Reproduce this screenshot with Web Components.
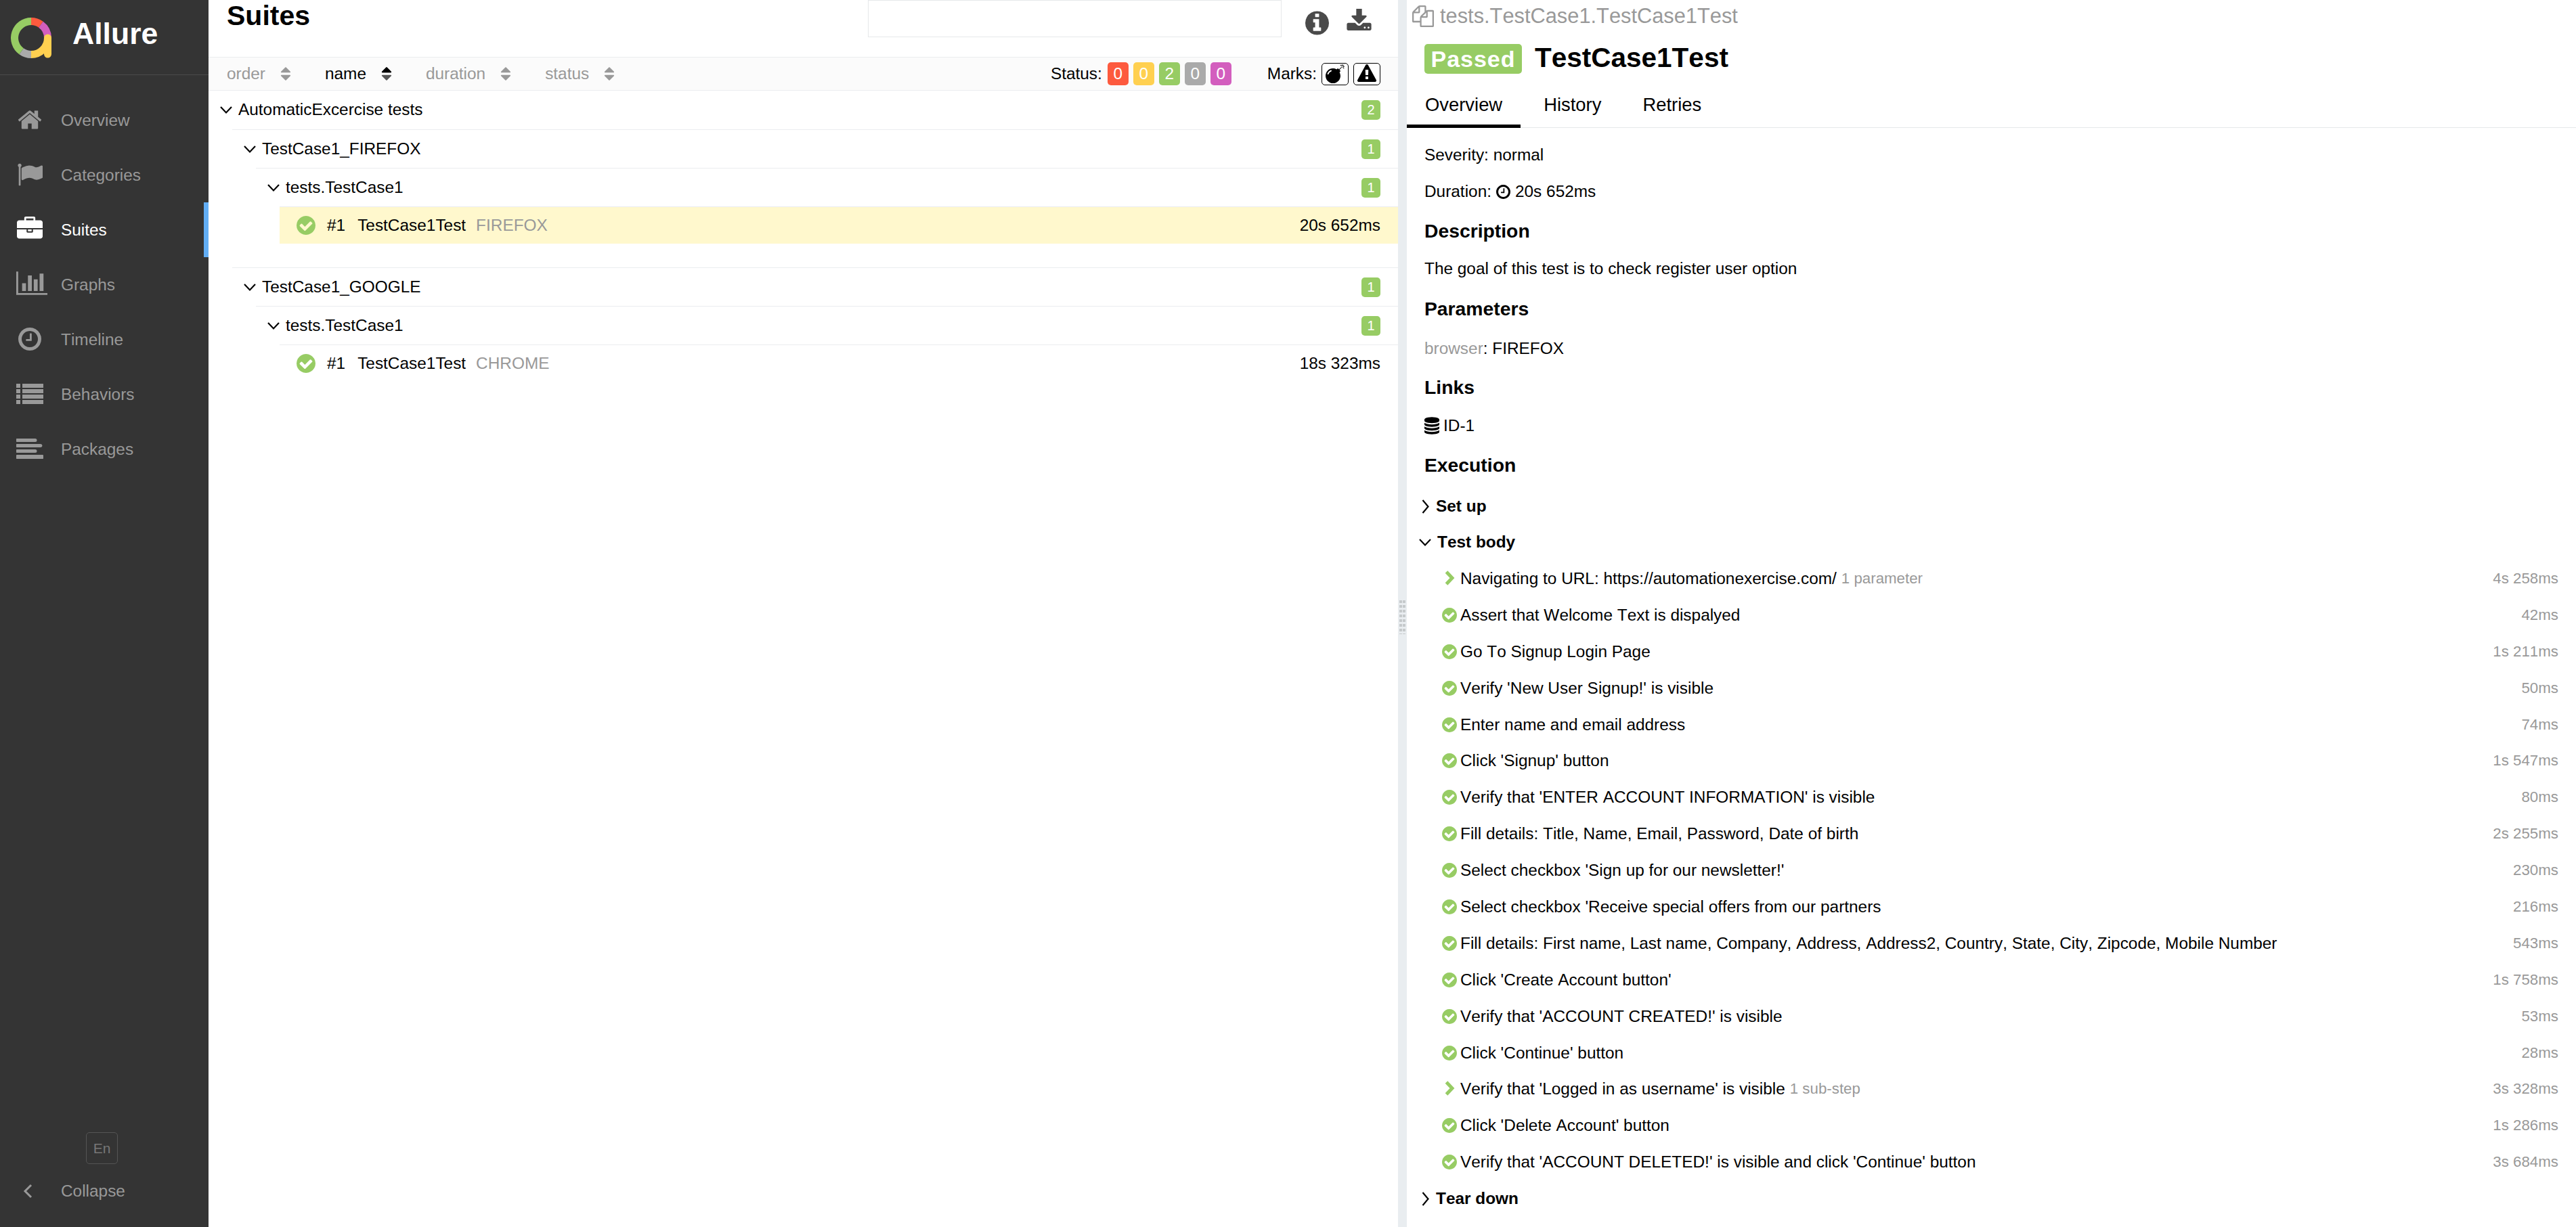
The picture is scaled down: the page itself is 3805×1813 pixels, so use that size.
<!DOCTYPE html>
<html>
<head>
<meta charset="utf-8">
<title>Allure</title>
<style>
  html, body { margin: 0; height: 100%; overflow: hidden; background: #fff; }
  body { font: 24.4px "Liberation Sans", Arial, sans-serif; font-kerning: none; color: #000; }
</style>
</head>
<body>
<al-app>
  <al-sidebar slot="side">
    <al-nav-item icon="home">Overview</al-nav-item>
    <al-nav-item icon="flag">Categories</al-nav-item>
    <al-nav-item icon="briefcase" active>Suites</al-nav-item>
    <al-nav-item icon="chart">Graphs</al-nav-item>
    <al-nav-item icon="clock">Timeline</al-nav-item>
    <al-nav-item icon="list">Behaviors</al-nav-item>
    <al-nav-item icon="align">Packages</al-nav-item>
  </al-sidebar>

  <al-suites slot="left">
    <al-tree-group name="AutomaticExcercise tests" count="2" first>
      <al-tree-group name="TestCase1_FIREFOX" count="1">
        <al-tree-group name="tests.TestCase1" count="1">
          <al-tree-leaf num="#1" name="TestCase1Test" param="FIREFOX" time="20s 652ms" selected></al-tree-leaf>
        </al-tree-group>
      </al-tree-group>
      <al-tree-group name="TestCase1_GOOGLE" count="1">
        <al-tree-group name="tests.TestCase1" count="1">
          <al-tree-leaf num="#1" name="TestCase1Test" param="CHROME" time="18s 323ms"></al-tree-leaf>
        </al-tree-group>
      </al-tree-group>
    </al-tree-group>
  </al-suites>

  <al-detail slot="right">
    <al-step name="Navigating to URL: https://automationexercise.com/" extra="1 parameter" time="4s 258ms" nested></al-step>
    <al-step name="Assert that Welcome Text is dispalyed" time="42ms"></al-step>
    <al-step name="Go To Signup Login Page" time="1s 211ms"></al-step>
    <al-step name="Verify 'New User Signup!' is visible" time="50ms"></al-step>
    <al-step name="Enter name and email address" time="74ms"></al-step>
    <al-step name="Click 'Signup' button" time="1s 547ms"></al-step>
    <al-step name="Verify that 'ENTER ACCOUNT INFORMATION' is visible" time="80ms"></al-step>
    <al-step name="Fill details: Title, Name, Email, Password, Date of birth" time="2s 255ms"></al-step>
    <al-step name="Select checkbox 'Sign up for our newsletter!'" time="230ms"></al-step>
    <al-step name="Select checkbox 'Receive special offers from our partners" time="216ms"></al-step>
    <al-step name="Fill details: First name, Last name, Company, Address, Address2, Country, State, City, Zipcode, Mobile Number" time="543ms"></al-step>
    <al-step name="Click 'Create Account button'" time="1s 758ms"></al-step>
    <al-step name="Verify that 'ACCOUNT CREATED!' is visible" time="53ms"></al-step>
    <al-step name="Click 'Continue' button" time="28ms"></al-step>
    <al-step name="Verify that 'Logged in as username' is visible" extra="1 sub-step" time="3s 328ms" nested></al-step>
    <al-step name="Click 'Delete Account' button" time="1s 286ms"></al-step>
    <al-step name="Verify that 'ACCOUNT DELETED!' is visible and click 'Continue' button" time="3s 684ms"></al-step>
  </al-detail>
</al-app>

<script>
const ICONS = {
  home: ["0 0 1792 1792", "M1472 992v480q0 26-19 45t-45 19h-384v-384h-256v384h-384q-26 0-45-19t-19-45v-480q0-1 .5-3t.5-3l575-474 575 474q1 2 1 6zm223-69l-62 74q-8 9-21 11h-3q-13 0-21-7l-692-577-692 577q-12 8-24 7-13-2-21-11l-62-74q-8-10-7-23.5t11-21.5l719-599q32-26 76-26t76 26l244 204v-195q0-14 9-23t23-9h192q14 0 23 9t9 23v408l219 182q10 8 11 21.5t-7 23.5z"],
  flag: ["0 0 1792 1792", "M320 256q0 72-64 110v1266q0 13-9.5 22.5t-22.5 9.5h-64q-13 0-22.5-9.5t-9.5-22.5v-1266q-64-38-64-110 0-53 37.5-90.5t90.5-37.5 90.5 37.5 37.5 90.5zm1472 64v763q0 25-12.5 38.5t-39.5 27.5q-215 116-369 116-61 0-123.5-22t-108.5-48-115.5-48-142.5-22q-192 0-464 146-17 9-33 9-26 0-45-19t-19-45v-742q0-32 31-55 21-14 79-43 236-120 421-120 107 0 200 29t219 88q38 19 88 19 54 0 117.5-21t110-47 88-47 54.5-21q26 0 45 19t19 45z"],
  briefcase: ["0 0 1792 1792", "M640 256h512v-128h-512v128zm1152 640v480q0 66-47 113t-113 47h-1472q-66 0-113-47t-47-113v-480h672v160q0 26 19 45t45 19h320q26 0 45-19t19-45v-160h672zm-768 0v128h-256v-128h256zm768-480v384h-1792v-384q0-66 47-113t113-47h352v-160q0-40 28-68t68-28h576q40 0 68 28t28 68v160h352q66 0 113 47t47 113z"],
  chart: ["0 128 2048 1664", "M640 896v512h-256v-512h256zm384-512v1024h-256v-1024h256zm1024 1152v128h-2048v-1536h128v1408h1920zm-640-896v768h-256v-768h256zm384-384v1152h-256v-1152h256z"],
  clock: ["128 128 1536 1536", "M1024 544v448q0 14-9 23t-23 9h-320q-14 0-23-9t-9-23v-64q0-14 9-23t23-9h224v-352q0-14 9-23t23-9h64q14 0 23 9t9 23zm416 352q0-148-73-273t-198-198-273-73-273 73-198 198-73 273 73 273 198 198 273 73 273-73 198-198 73-273zm224 0q0 209-103 385.5t-279.5 279.5-385.5 103-385.5-103-279.5-279.5-103-385.5 103-385.5 279.5-279.5 385.5-103 385.5 103 279.5 279.5 103 385.5z"],
  list: ["0 0 40 32", "M0 1h6v6H0zM9 1h31v6H9zM0 9h6v6H0zM9 9h31v6H9zM0 17h6v6H0zM9 17h31v6H9zM0 25h6v6H0zM9 25h31v6H9z"],
  align: ["0 0 40 32", "M1 1h27a2 2 0 0 1 0 5H1a2 2 0 0 1 0-5zM1 9h35a2 2 0 0 1 0 5H1a2 2 0 0 1 0-5zM1 17h27a2 2 0 0 1 0 5H1a2 2 0 0 1 0-5zM1 25h38a1 2 0 0 1 0 6H1a1 2 0 0 1 0-6z"],
  check: ["128 128 1536 1536", "M1412 734q0-28-18-46l-91-90q-19-19-45-19t-45 19l-408 407-226-226q-19-19-45-19t-45 19l-91 90q-18 18-18 46 0 27 18 45l362 362q19 19 45 19 27 0 46-19l543-543q18-18 18-45zm252 162q0 209-103 385.5t-279.5 279.5-385.5 103-385.5-103-279.5-279.5-103-385.5 103-385.5 279.5-279.5 385.5-103 385.5 103 279.5 279.5 103 385.5z"],
  info: ["128 128 1536 1536", "M1152 1376v-160q0-14-9-23t-23-9h-96v-512q0-14-9-23t-23-9h-320q-14 0-23 9t-9 23v160q0 14 9 23t23 9h96v320h-96q-14 0-23 9t-9 23v160q0 14 9 23t23 9h448q14 0 23-9t9-23zm-128-896v-160q0-14-9-23t-23-9h-192q-14 0-23 9t-9 23v160q0 14 9 23t23 9h192q14 0 23-9t9-23zm640 416q0 209-103 385.5t-279.5 279.5-385.5 103-385.5-103-279.5-279.5-103-385.5 103-385.5 279.5-279.5 385.5-103 385.5 103 279.5 279.5 103 385.5z"],
  download: ["0 128 1792 1536", "M1344 1344q0-26-19-45t-45-19-45 19-19 45 19 45 45 19 45-19 19-45zm256 0q0-26-19-45t-45-19-45 19-19 45 19 45 45 19 45-19 19-45zm128-224v320q0 40-28 68t-68 28h-1472q-40 0-68-28t-28-68v-320q0-40 28-68t68-28h465l135 136q58 56 136 56t136-56l136-136h464q40 0 68 28t28 68zm-325-569q17 41-14 70l-448 448q-18 19-45 19t-45-19l-448-448q-31-29-14-70 17-39 59-39h256v-448q0-26 19-45t45-19h256q26 0 45 19t19 45v448h256q42 0 59 39z"],
  bomb: ["0 0 1792 1792", "M571 589q-10-25-34-35t-49 0q-108 44-191 127t-127 191q-10 25 0 49t35 34q13 5 24 5 42 0 60-40 34-84 98.5-148.5t148.5-98.5q25-11 35-35t0-49zm942-356l46 46-244 243 68 68q19 19 19 45.5t-19 45.5l-64 64q89 161 89 343 0 143-55.5 273.5t-150 225-225 150-273.5 55.5-273.5-55.5-225-150-150-225-55.5-273.5 55.5-273.5 150-225 225-150 273.5-55.5q182 0 343 89l64-64q19-19 45.5-19t45.5 19l68 68zm8-56q-10 10-22 10-13 0-23-10l-91-90q-9-10-9-23t9-23q10-9 23-9t23 9l90 91q10 9 10 22.5t-10 22.5zm230 230q-11 9-23 9t-23-9l-90-91q-10-9-10-22.5t10-22.5q9-10 22.5-10t22.5 10l91 90q9 10 9 23t-9 23zm41-183q0 14-9 23t-23 9h-96q-14 0-23-9t-9-23 9-23 23-9h96q14 0 23 9t9 23zm-192-192v96q0 14-9 23t-23 9-23-9-9-23v-96q0-14 9-23t23-9 23 9 9 23zm151 55l-91 90q-10 10-22 10-13 0-23-10-10-9-10-22.5t10-22.5l90-91q10-9 23-9t23 9q9 10 9 23t-9 23z"],
  warning: ["0 0 1792 1792", "M1024 1375v-190q0-14-9.5-23.5t-22.5-9.5h-192q-13 0-22.5 9.5t-9.5 23.5v190q0 14 9.5 23.5t22.5 9.5h192q13 0 22.5-9.5t9.5-23.5zm-2-374l18-459q0-12-10-19-13-11-24-11h-220q-11 0-24 11-10 7-10 21l17 457q0 10 10 16.5t24 6.5h185q14 0 23.5-6.5t10.5-16.5zm-14-934l768 1408q35 63-2 126-17 29-46.5 46t-63.5 17h-1536q-34 0-63.5-17t-46.5-46q-37-63-2-126l768-1408q17-31 47-49t65-18 65 18 47 49z"],
  database: ["128 128 1536 1536", "M896 768q237 0 443-43t325-127v170q0 69-103 128t-280 93.5-385 34.5-385-34.5-280-93.5-103-128v-170q119 84 325 127t443 43zm0 768q237 0 443-43t325-127v170q0 69-103 128t-280 93.5-385 34.5-385-34.5-280-93.5-103-128v-170q119 84 325 127t443 43zm0-384q237 0 443-43t325-127v170q0 69-103 128t-280 93.5-385 34.5-385-34.5-280-93.5-103-128v-170q119 84 325 127t443 43zm0-1152q208 0 385 34.5t280 93.5 103 128v128q0 69-103 128t-280 93.5-385 34.5-385-34.5-280-93.5-103-128v-128q0-69 103-128t280-93.5 385-34.5z"],
  copy: ["0 0 1792 1792", "M1696 384q40 0 68 28t28 68v1216q0 40-28 68t-68 28h-960q-40 0-68-28t-28-68v-288h-544q-40 0-68-28t-28-68v-672q0-40 20-88t48-76l408-408q28-28 76-48t88-20h416q40 0 68 28t28 68v328q68-40 128-40h416zm-544 213l-299 299h299v-299zm-640-384l-299 299h299v-299zm196 647l316-316v-416h-384v416q0 40-28 68t-68 28h-416v640h512v-256q0-40 20-88t48-76zm956 804v-1152h-384v416q0 40-28 68t-68 28h-416v640h768z"],
  sort: ["320 192 1152 1408", "M1408 1088q0 26-19 45l-448 448q-19 19-45 19t-45-19l-448-448q-19-19-19-45t19-45 45-19h896q26 0 45 19t19 45zm0-384q0 26-19 45t-45 19h-896q-26 0-45-19t-19-45 19-45l448-448q19-19 45-19t45 19l448 448q19 19 19 45z"],
  sortup: ["320 192 1152 1408", "M1408 704q0 26-19 45t-45 19h-896q-26 0-45-19t-19-45 19-45l448-448q19-19 45-19t45 19l448 448q19 19 19 45z"],
};

class AlIcon extends HTMLElement {
  connectedCallback() {
    const root = this.attachShadow({ mode: "open" });
    const [box, d] = ICONS[this.getAttribute("name")];
    root.innerHTML = `
      <style>
        :host { display: inline-flex; flex: none; }
        svg { width: 100%; height: 100%; fill: currentColor; display: block; }
      </style>
      <svg viewBox="${box}" preserveAspectRatio="xMidYMid meet"><path d="${d}"/></svg>`;
  }
}
customElements.define("al-icon", AlIcon);

// thin chevrons used by every collapsible row
class AlChevron extends HTMLElement {
  connectedCallback() {
    const open = this.hasAttribute("open");
    this.attachShadow({ mode: "open" }).innerHTML = `
      <style>
        :host { display: inline-flex; flex: none; width: ${open ? 18 : 11}px; height: ${open ? 11 : 21}px; color: var(--chev, #000); }
        svg { width: 100%; height: 100%; display: block; overflow: visible; }
        polyline { fill: none; stroke: currentColor; stroke-width: 2.2; }
      </style>
      <svg viewBox="${open ? "0 0 18 11" : "0 0 11 21"}">
        <polyline points="${open ? "1,1 9,9.5 17,1" : "1.5,1 9.5,10.5 1.5,20"}"/>
      </svg>`;
  }
}
customElements.define("al-chevron", AlChevron);

class AlApp extends HTMLElement {
  constructor() {
    super();
    this.attachShadow({ mode: "open" }).innerHTML = `
      <style>
        :host { display: flex; width: 3805px; height: 1813px; overflow: hidden; }
        .side { flex: 0 0 308px; display: flex; }
        .left { flex: 0 0 1757px; display: flex; min-width: 0; }
        .gutter {
          flex: 0 0 13px; background: #e9edf0;
          display: flex; align-items: center; justify-content: center;
        }
        .dots {
          width: 9px; height: 53px; margin-top: 8px;
          background:
            repeating-linear-gradient(#e9edf0 0 3px, transparent 3px 7px),
            linear-gradient(90deg, #c6cacc 0 4px, #e9edf0 4px 5px, #c6cacc 5px 9px);
        }
        .right { flex: 1; display: flex; min-width: 0; }
      </style>
      <div class="side"><slot name="side"></slot></div>
      <div class="left"><slot name="left"></slot></div>
      <div class="gutter"><div class="dots"></div></div>
      <div class="right"><slot name="right"></slot></div>`;
  }
}
customElements.define("al-app", AlApp);

class AlSidebar extends HTMLElement {
  constructor() {
    super();
    this.attachShadow({ mode: "open" }).innerHTML = `
      <style>
        :host { display: flex; flex-direction: column; width: 308px; background: #343434; color: #999; }
        .brand {
          height: 110px; border-bottom: 1px solid #4b4b4b;
          display: flex; align-items: center; padding-left: 16px; box-sizing: content-box;
        }
        .brand svg { width: 61px; height: 61px; margin-top: 2px; flex: none; }
        .brand span { margin-left: 30px; font-size: 44.6px; font-weight: bold; color: #fff; margin-top: -11px; }
        nav { display: flex; flex-direction: column; margin-top: 26px; }
        .spacer { flex: 1; }
        .lang {
          align-self: flex-start; margin-left: 127px; width: 47px; height: 47px; box-sizing: border-box;
          border: 1px solid #555; border-radius: 5px; color: #777; font-size: 21px;
          display: flex; align-items: center; justify-content: center;
        }
        .collapse { height: 80px; margin-bottom: 13px; display: flex; align-items: center; padding-left: 34px; }
        .collapse svg { width: 14px; height: 22px; flex: none; }
        .collapse span { margin-left: 42px; }
      </style>
      <div class="brand">
        <svg viewBox="0 0 61 61">
          <g fill="none" stroke-width="11">
            <path d="M30 5.5A24.5 24.5 0 0 1 44.4 10.2" stroke="#fd5a3e"/>
            <path d="M44.4 10.2A24.5 24.5 0 0 1 54.5 30" stroke="#d35ebe"/>
            <path d="M54.5 30A24.5 24.5 0 0 1 30 54.5" stroke="#ffd050"/>
            <path d="M30 54.5A24.5 24.5 0 0 1 15.6 49.8" stroke="#aaa"/>
            <path d="M15.6 49.8A24.5 24.5 0 0 1 30 5.5" stroke="#97cc64"/>
            <path d="M54.5 30V54" stroke="#ffd050" stroke-linecap="round"/>
          </g>
        </svg>
        <span>Allure</span>
      </div>
      <nav><slot></slot></nav>
      <div class="spacer"></div>
      <div class="lang">En</div>
      <div class="collapse">
        <svg viewBox="0 0 14 22"><polyline points="12,2 3,11 12,20" fill="none" stroke="#999" stroke-width="3"/></svg>
        <span>Collapse</span>
      </div>`;
  }
}
customElements.define("al-sidebar", AlSidebar);

class AlNavItem extends HTMLElement {
  connectedCallback() {
    const name = this.getAttribute("icon");
    const wide = name === "chart";
    this.attachShadow({ mode: "open" }).innerHTML = `
      <style>
        :host { display: flex; align-items: center; height: 81px; box-sizing: border-box; padding-left: 24px; position: relative; }
        :host([active]) { color: #fff; border-right: 7px solid #62aef5; }
        .ico { width: 40px; height: 36px; flex: none; display: flex; }
        al-icon { width: ${wide ? 46 : 40}px; height: ${name === "clock" ? 34 : 38}px; margin-top: ${name === "clock" ? 0 : -2}px; }
        span { margin-left: 26px; }
      </style>
      <div class="ico"><al-icon name="${name}"></al-icon></div>
      <span><slot></slot></span>`;
  }
}
customElements.define("al-nav-item", AlNavItem);

class AlSuites extends HTMLElement {
  constructor() {
    super();
    const sortBtn = (label, on) => `
      <div class="sort ${on ? "on" : ""}">${label}
        <span class="arrows">
          <al-icon name="sort"></al-icon>
          ${on ? `<al-icon class="up" name="sortup"></al-icon>` : ""}
        </span>
      </div>`;
    const stat = (n, c) => `<span class="stat" style="background:${c}">${n}</span>`;
    this.attachShadow({ mode: "open" }).innerHTML = `
      <style>
        :host { display: block; width: 100%; background: #fff; }
        header { height: 84px; display: flex; align-items: flex-start; padding: 0 38px 0 27px; box-sizing: border-box; }
        h2 { margin: 0; font-size: 41px; line-height: 46px; font-weight: bold; }
        input {
          margin-left: auto; width: 611px; height: 55px; box-sizing: border-box;
          border: 1px solid #e6e8ea; background: #fff; padding: 0;
        }
        .info { width: 35px; height: 36px; color: #4a4a4a; margin: 16px 0 0 35px; }
        .dl { width: 39px; height: 36px; color: #4a4a4a; margin: 13px 0 0 25px; }
        .bar {
          height: 50px; box-sizing: border-box; background: #fbfbfb;
          border-top: 1px solid #ebedef; border-bottom: 1px solid #ebedef;
          display: flex; align-items: center; padding: 0 26px 0 27px;
        }
        .sort { display: flex; align-items: center; color: #999; margin-right: 50px; }
        .arrows { position: relative; display: flex; margin-left: 22px; color: #999; }
        .arrows al-icon { width: 16px; height: 20px; }
        .arrows .up { position: absolute; left: 0; top: 0; color: #000; }
        .sort.on { color: #000; }
        .sort.on .arrows { color: #555; }
        .grow { flex: 1; }
        .stat {
          width: 31px; height: 34px; border-radius: 5px; color: #fff; margin-left: 7px;
          display: flex; align-items: center; justify-content: center;
        }
        .label { margin-right: 1px; }
        .label.marks { margin-left: 53px; margin-right: 0; }
        .mark {
          width: 40px; height: 33px; box-sizing: border-box; margin-left: 7px;
          border: 1px solid #000; border-radius: 5px; background: #fff;
          display: flex; align-items: center; justify-content: center;
        }
        .mark al-icon { width: 28px; height: 28px; }
      </style>
      <header>
        <h2>Suites</h2>
        <input type="text">
        <al-icon class="info" name="info"></al-icon>
        <al-icon class="dl" name="download"></al-icon>
      </header>
      <div class="bar">
        ${sortBtn("order")}${sortBtn("name", true)}${sortBtn("duration")}${sortBtn("status")}
        <div class="grow"></div>
        <span class="label">Status:</span>
        ${stat(0, "#fd5a3e")}${stat(0, "#ffd050")}${stat(2, "#97cc64")}${stat(0, "#aaa")}${stat(0, "#d35ebe")}
        <span class="label marks">Marks:</span>
        <span class="mark"><al-icon name="bomb"></al-icon></span>
        <span class="mark"><al-icon name="warning"></al-icon></span>
      </div>
      <slot></slot>`;
  }
}
customElements.define("al-suites", AlSuites);

class AlTreeGroup extends HTMLElement {
  connectedCallback() {
    this.attachShadow({ mode: "open" }).innerHTML = `
      <style>
        :host { display: block; font-kerning: normal; }
        .row {
          height: 57px; box-sizing: border-box; border-top: 1px solid #ebedef;
          display: flex; align-items: center; padding: 0 26px 0 17px;
        }
        :host([first]) .row { border-top: 0; }
        al-chevron { margin-right: 9px; }
        .name { flex: 1; margin-top: -1px; }
        .badge {
          width: 28px; height: 29px; border-radius: 5px; background: #97cc64; color: #fff; font-size: 20px;
          display: flex; align-items: center; justify-content: center;
        }
        .kids { margin-left: 35px; }
      </style>
      <div class="row">
        <al-chevron open></al-chevron>
        <span class="name">${this.getAttribute("name")}</span>
        <span class="badge">${this.getAttribute("count")}</span>
      </div>
      <div class="kids"><slot></slot></div>`;
  }
}
customElements.define("al-tree-group", AlTreeGroup);

class AlTreeLeaf extends HTMLElement {
  connectedCallback() {
    const attr = (n) => this.getAttribute(n);
    this.attachShadow({ mode: "open" }).innerHTML = `
      <style>
        :host { display: block; margin-bottom: 35px; }
        .row {
          height: 55px; box-sizing: border-box; border-top: 1px solid #ebedef;
          display: flex; align-items: center; padding: 0 26px 0 25px;
        }
        :host([selected]) .row { background: #fff8cd; }
        al-icon { width: 28px; height: 28px; color: #97cc64; margin-right: 17px; }
        .num { margin-right: 18px; }
        .param { color: #999; margin-left: 15px; }
        .time { margin-left: auto; }
      </style>
      <div class="row">
        <al-icon name="check"></al-icon>
        <span class="num">${attr("num")}</span>
        <span>${attr("name")}</span>
        <span class="param">${attr("param")}</span>
        <span class="time">${attr("time")}</span>
      </div>`;
  }
}
customElements.define("al-tree-leaf", AlTreeLeaf);

class AlDetail extends HTMLElement {
  constructor() {
    super();
    this.attachShadow({ mode: "open" }).innerHTML = `
      <style>
        :host { display: block; width: 100%; background: #fff; }
        .crumb { height: 48px; display: flex; align-items: center; padding-left: 8px; color: #999; font-size: 30.8px; }
        .crumb al-icon { width: 32px; height: 32px; margin-right: 9px; }
        .title { height: 44px; margin-top: 17px; display: flex; align-items: center; padding-left: 26px; }
        .passed {
          height: 44px; width: 144px; border-radius: 5px; background: #97cc64; color: #fff;
          font-size: 34px; font-weight: bold; letter-spacing: 1px;
          display: flex; align-items: center; justify-content: center;
        }
        h1 { margin: -3px 0 0 19px; font-size: 40.5px; font-weight: bold; }
        .tabs { height: 80px; box-sizing: border-box; border-bottom: 1px solid #e6e8ea; display: flex; gap: 7px; align-items: flex-end; font-size: 27.4px; }
        .tab { height: 56px; padding: 0 27px 13px; box-sizing: border-box; display: flex; align-items: center; margin-bottom: -1px; }
        .tab.on { border-bottom: 5px solid #000; padding-bottom: 8px; }
        .body { padding: 13px 26px 0 26px; }
        .line { height: 54px; display: flex; align-items: center; white-space: pre; }
        .line al-icon { width: 21px; height: 21px; margin: 0 7px; }
        .line al-icon.db { margin: 0 6px 0 0; width: 22px; height: 26px; }
        h3 { margin: 3px 0 0; height: 58px; display: flex; align-items: center; font-size: 28.3px; font-weight: bold; }
        .mute { color: #999; }
        .stage {
          height: 52px; margin-left: -4px; display: flex; align-items: center; font-weight: bold;
        }
        .stage al-chevron { margin-right: 10px; }
        .stage.first { margin-top: 6px; }
        .stage.last { margin-top: 1px; }
        .stage.open { height: 54px; }
        .stage.open al-chevron { margin-left: -4px; margin-right: 9px; }
      </style>
      <div class="crumb"><al-icon name="copy"></al-icon>tests.TestCase1.TestCase1Test</div>
      <div class="title"><span class="passed">Passed</span><h1>TestCase1Test</h1></div>
      <div class="tabs">
        <div class="tab on">Overview</div><div class="tab">History</div><div class="tab">Retries</div>
      </div>
      <div class="body">
        <div class="line">Severity: normal</div>
        <div class="line">Duration:<al-icon name="clock"></al-icon>20s 652ms</div>
        <h3 style="margin-top:2px">Description</h3>
        <div class="line">The goal of this test is to check register user option</div>
        <h3>Parameters</h3>
        <div class="line" style="margin-top:3px"><span class="mute">browser</span>: FIREFOX</div>
        <h3 style="margin-top:1px">Links</h3>
        <div class="line" style="margin-top:1px"><al-icon class="db" name="database"></al-icon>ID-1</div>
        <h3 style="margin-top:2px">Execution</h3>
        <div class="stage first"><al-chevron></al-chevron>Set up</div>
        <div class="stage open"><al-chevron open></al-chevron>Test body</div>
        <slot></slot>
        <div class="stage last"><al-chevron></al-chevron>Tear down</div>
      </div>`;
  }
}
customElements.define("al-detail", AlDetail);

class AlStep extends HTMLElement {
  connectedCallback() {
    const nested = this.hasAttribute("nested");
    const extra = this.getAttribute("extra");
    this.attachShadow({ mode: "open" }).innerHTML = `
      <style>
        :host { display: flex; align-items: center; height: 53.9px; padding-left: 26px; }
        .mark { width: 22px; height: 22px; margin-right: 5px; flex: none; display: flex; align-items: center; justify-content: center; color: #97cc64; }
        al-icon { width: 22px; height: 22px; }
        svg { width: 15px; height: 22px; margin-top: -2px; }
        .extra { color: #999; font-size: 22.3px; margin-left: 7px; }
        .time { margin-left: auto; color: #999; font-size: 22.3px; }
      </style>
      <span class="mark">${nested
        ? `<svg viewBox="0 0 15 22"><polyline points="2.5,2 11,11 2.5,20" fill="none" stroke="currentColor" stroke-width="5"/></svg>`
        : `<al-icon name="check"></al-icon>`}</span>
      <span>${this.getAttribute("name")}</span>
      ${extra ? `<span class="extra">${extra}</span>` : ""}
      <span class="time">${this.getAttribute("time")}</span>`;
  }
}
customElements.define("al-step", AlStep);
</script>
</body>
</html>
